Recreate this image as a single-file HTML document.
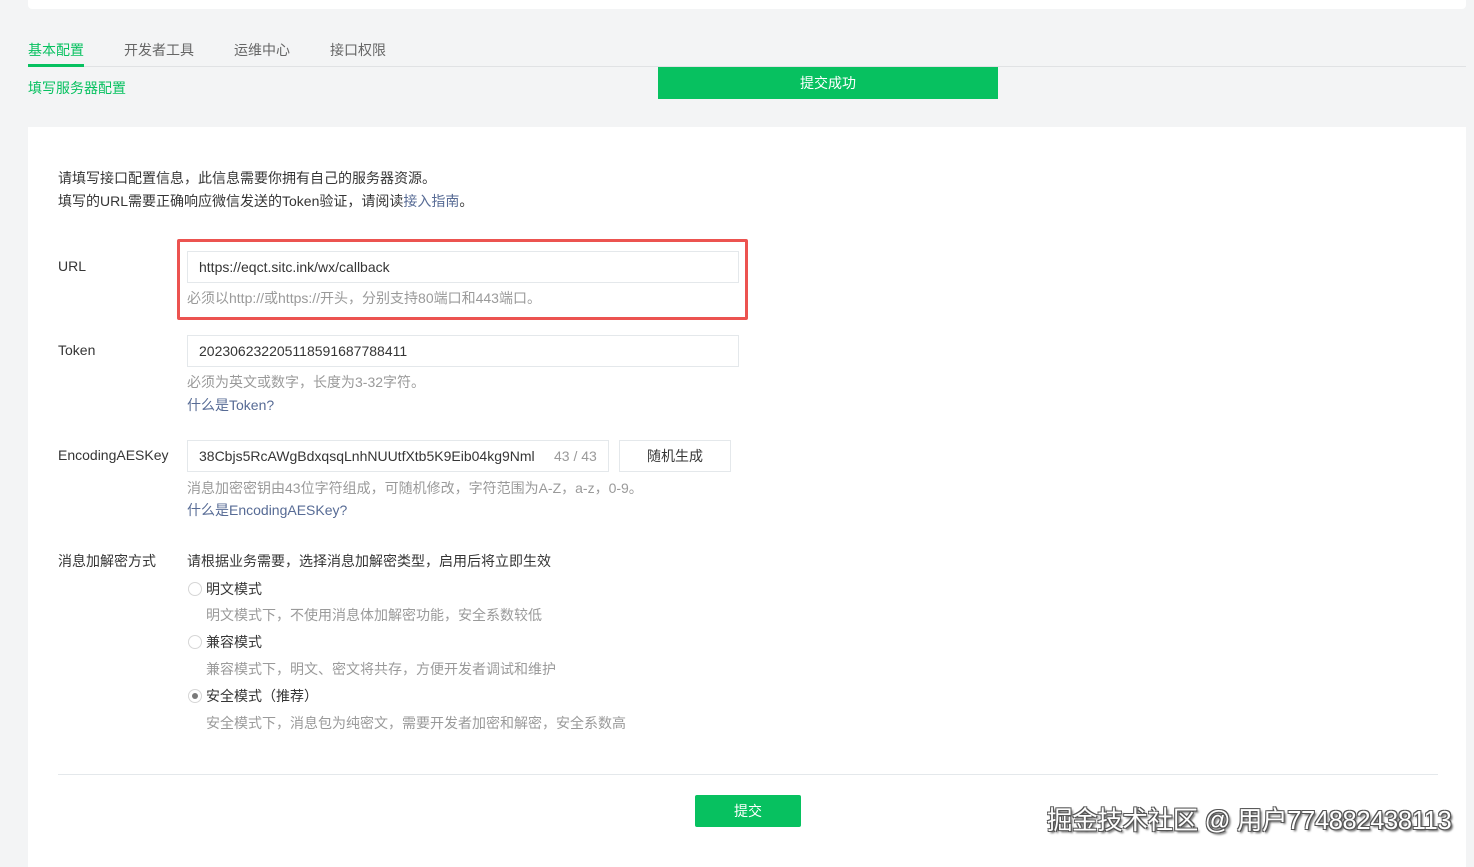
<!DOCTYPE html>
<html><head><meta charset="utf-8"><style>
*{margin:0;padding:0;box-sizing:border-box}
body{width:1474px;height:855px;background:#f3f4f5;font-family:"Liberation Sans","Noto Sans CJK SC",sans-serif;font-size:14px;color:#353535;position:relative;overflow:hidden}
.a{position:absolute;white-space:nowrap}
.g{color:#9a9a9a}
.l{color:#576b95}
.inp{position:absolute;background:#fff;border:1px solid #e4e8eb;height:32px;padding-left:11px;line-height:30px;font-size:14px;color:#353535}
.radio{position:absolute;width:14px;height:14px;border:1px solid #d6d6d6;border-radius:50%;background:#fff}
</style></head><body>
<div class="a" style="left:28px;top:0;width:1438px;height:9px;background:#fff;border-radius:0 0 4px 4px"></div>
<div class="a" style="left:28px;top:66px;width:1438px;height:1px;background:#e0e2e4"></div>
<div class="a" style="left:28px;top:40px;color:#07c160">基本配置</div>
<div class="a" style="left:28px;top:64px;width:56px;height:3px;background:#07c160"></div>
<div class="a" style="left:124px;top:40px;color:#666">开发者工具</div>
<div class="a" style="left:234px;top:40px;color:#666">运维中心</div>
<div class="a" style="left:330px;top:40px;color:#666">接口权限</div>
<div class="a" style="left:28px;top:78px;color:#07c160">填写服务器配置</div>
<div class="a" style="left:658px;top:67px;width:340px;height:32px;background:#07c160;color:#fff;text-align:center;line-height:32px">提交成功</div>

<div class="a" style="left:28px;top:127px;width:1438px;height:740px;background:#fff"></div>
<div class="a" style="left:58px;top:167px;line-height:23px">请填写接口配置信息，此信息需要你拥有自己的服务器资源。<br>填写的URL需要正确响应微信发送的Token验证，请阅读<span class="l">接入指南</span>。</div>

<div class="a" style="left:58px;top:258px">URL</div>
<div class="a" style="left:177px;top:239px;width:571px;height:81px;border:3px solid #ec5350;border-radius:2px"></div>
<div class="inp" style="left:187px;top:251px;width:552px">https://eqct.sitc.ink/wx/callback</div>
<div class="a g" style="left:187px;top:288px">必须以http://或https://开头，分别支持80端口和443端口。</div>

<div class="a" style="left:58px;top:342px">Token</div>
<div class="inp" style="left:187px;top:335px;width:552px">202306232205118591687788411</div>
<div class="a g" style="left:187px;top:372px">必须为英文或数字，长度为3-32字符。</div>
<div class="a l" style="left:187px;top:395px">什么是Token?</div>

<div class="a" style="left:58px;top:447px">EncodingAESKey</div>
<div class="inp" style="left:187px;top:440px;width:422px;overflow:hidden">38Cbjs5RcAWgBdxqsqLnhNUUtfXtb5K9Eib04kg9Nml<span class="a g" style="left:364px;top:0;background:#fff;padding-left:2px">43 / 43</span></div>
<div class="a" style="left:619px;top:440px;width:112px;height:32px;border:1px solid #e4e8eb;line-height:30px;text-align:center;background:#fff">随机生成</div>
<div class="a g" style="left:187px;top:478px">消息加密密钥由43位字符组成，可随机修改，字符范围为A-Z，a-z，0-9。</div>
<div class="a l" style="left:187px;top:500px">什么是EncodingAESKey?</div>

<div class="a" style="left:58px;top:551px">消息加解密方式</div>
<div class="a" style="left:187px;top:551px">请根据业务需要，选择消息加解密类型，启用后将立即生效</div>
<div class="radio" style="left:188px;top:582px"></div>
<div class="a" style="left:206px;top:579px">明文模式</div>
<div class="a g" style="left:206px;top:605px">明文模式下，不使用消息体加解密功能，安全系数较低</div>
<div class="radio" style="left:188px;top:635px"></div>
<div class="a" style="left:206px;top:632px">兼容模式</div>
<div class="a g" style="left:206px;top:659px">兼容模式下，明文、密文将共存，方便开发者调试和维护</div>
<div class="radio" style="left:188px;top:689px"><div style="position:absolute;left:3px;top:3px;width:6px;height:6px;border-radius:50%;background:#7a7a7a"></div></div>
<div class="a" style="left:206px;top:686px">安全模式（推荐）</div>
<div class="a g" style="left:206px;top:713px">安全模式下，消息包为纯密文，需要开发者加密和解密，安全系数高</div>

<div class="a" style="left:58px;top:774px;width:1380px;height:1px;background:#e4e8eb"></div>
<div class="a" style="left:695px;top:795px;width:106px;height:32px;background:#07c160;color:#fff;text-align:center;line-height:32px;border-radius:2px">提交</div>
<div class="a" style="left:1047px;top:800px;font-size:25.5px;letter-spacing:-0.35px;color:#fff;text-shadow:1px 1px 0 #555,-1px -1px 0 #555,1px -1px 0 #555,-1px 1px 0 #555,2px 2px 2px #444">掘金技术社区 @ 用户774882438113</div>
</body></html>
